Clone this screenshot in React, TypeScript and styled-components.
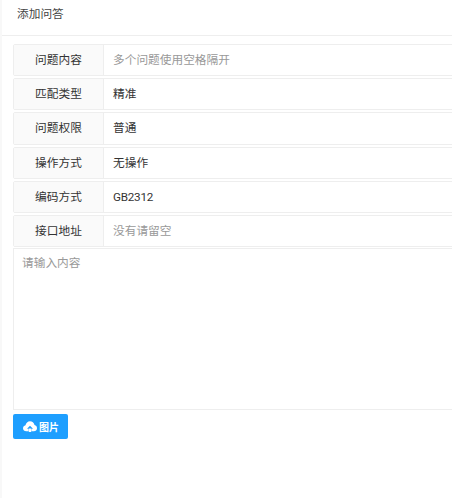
import React from 'react'
import styled, { createGlobalStyle } from 'styled-components'

const GlobalStyle = createGlobalStyle`
    html, body {
        margin: 0;
        padding: 0;
        background: #fff;
        overflow: hidden;
    }
    body {
        font-family: Roboto, "Noto Sans CJK SC", sans-serif;
        font-size: 11.7px;
        color: #333;
    }
`

const Page = styled.div`
    width: 452px;
    height: 498px;
    overflow: hidden;
    box-sizing: border-box;
    border-left: 2px solid #f8f8f8;
`

const Header = styled.div`
    height: 36px;
    box-sizing: border-box;
    padding-left: 15px;
    line-height: 29px;
    border-bottom: 1px solid #eee;
    color: #444;
`

const Form = styled.div`
    width: 520px;
    padding: 8px 0 0 11px;
    display: flex;
    flex-direction: column;
`

const RowList = styled.div`
    display: flex;
    flex-direction: column;
    gap: 2px;
`

const Row = styled.div`
    display: flex;
    height: 32.2px;
    box-sizing: border-box;
    border: 1px solid #eee;
    border-radius: 2px 0 0 2px;
`

const Label = styled.div`
    width: 90px;
    flex: none;
    text-align: center;
    line-height: 31.7px;
    background: #fafafa;
    border-right: 1px solid #eee;
    box-sizing: border-box;
    color: #333;
`

const Value = styled.div<{ $placeholder?: boolean; $latin?: boolean }>`
    flex: 1;
    padding-left: 9px;
    line-height: 31.7px;
    color: ${p => (p.$placeholder ? '#999' : '#333')};
    letter-spacing: ${p => (p.$latin ? '-0.25px' : 'normal')};
`

const TextBox = styled.div`
    height: 162px;
    margin-top: 1px;
    box-sizing: border-box;
    padding: 5px 8px;
    line-height: 18px;
    border: 1px solid #eee;
    color: #999;
`

const UploadButton = styled.button`
    align-self: flex-start;
    display: flex;
    align-items: center;
    justify-content: center;
    gap: 2px;
    width: 55px;
    height: 25px;
    margin-top: 4px;
    padding: 0 0 0 1px;
    border: 0;
    border-radius: 2px;
    background: #1e9fff;
    color: #fff;
    font: inherit;
    font-size: 10px;
    font-weight: 700;
`

const rows = [
    { label: '问题内容', value: '多个问题使用空格隔开', placeholder: true },
    { label: '匹配类型', value: '精准' },
    { label: '问题权限', value: '普通' },
    { label: '操作方式', value: '无操作' },
    { label: '编码方式', value: 'GB2312', latin: true },
    { label: '接口地址', value: '没有请留空', placeholder: true },
]

const CloudIcon = () => (
    <svg width="14" height="11" viewBox="0 0 14 11">
        <path
            fill="currentColor"
            d="M3.3 10.200C1.500 10.200 0 8.900 0 7.200c0-1.500 1.100-2.700 2.500-3C2.900 2 4.800.2 7 .2c2.200 0 4.100 1.600 4.500 3.900C13 4.400 14 5.700 14 7.200c0 1.700-1.400 3-3.200 3H8.500V7.800h1.500L7 4.700 4 7.800h1.500v2.400H3.300zM5.800 7.500h2.400v3.500H5.800z"
        />
    </svg>
)

const App: React.FC = () => {
    return (
        <Page>
            <GlobalStyle />
            <Header>添加问答</Header>
            <Form>
                <RowList>
                    {rows.map(row => (
                        <Row key={row.label}>
                            <Label>{row.label}</Label>
                            <Value $placeholder={row.placeholder} $latin={row.latin}>{row.value}</Value>
                        </Row>
                    ))}
                </RowList>
                <TextBox>请输入内容</TextBox>
                <UploadButton>
                    <CloudIcon />
                    图片
                </UploadButton>
            </Form>
        </Page>
    )
}

export default App
